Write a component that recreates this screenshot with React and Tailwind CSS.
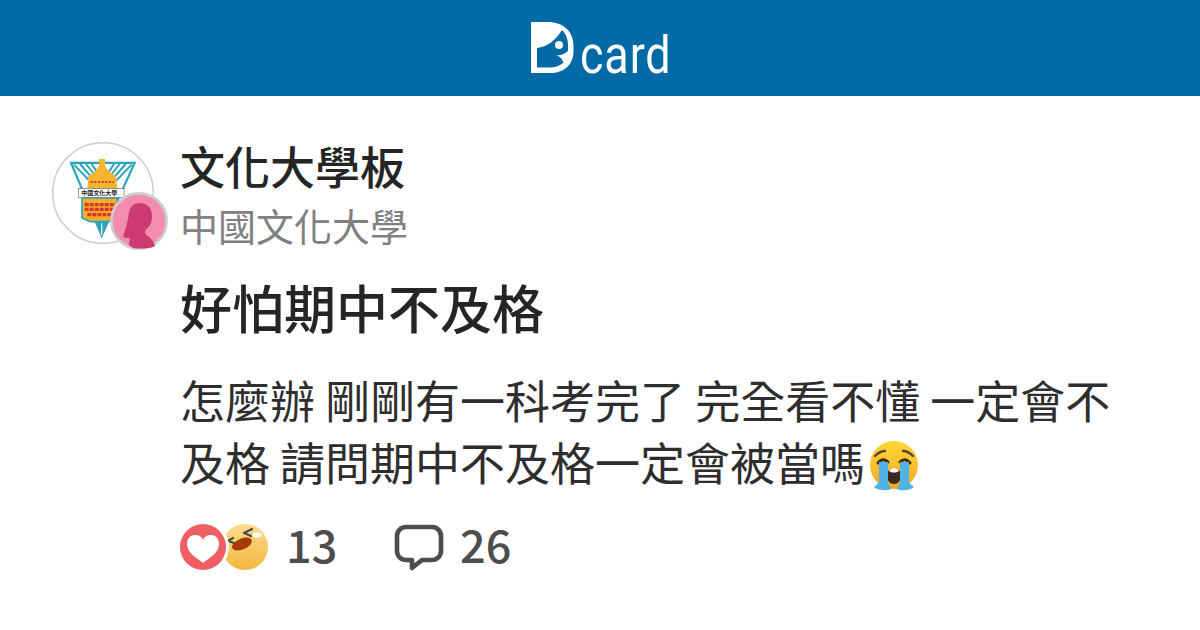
// Dcard share card: forum post preview
const cjk = { fontFamily: '"Noto Sans CJK TC", "Noto Sans", sans-serif' }

function DcardMark() {
  return (
    <svg width="43" height="52" viewBox="0 0 43 52" className="block shrink-0">
      <path
        fillRule="evenodd"
        fill="#fff"
        d="M0 0H17C32 0 42.5 9 42.5 24V29C42.5 43 33 51 19 51H0ZM6 26V45.5H19C30 45.5 37 39 37 28V24C37 17 35 12 31 8C25 18 16 25 6 26Z"
      />
      <circle cx="28" cy="23" r="4" fill="#fff" />
      <path d="M25 33C29 34 32 33 37 29V40H32C31 36 28 34 25 33Z" fill="#fff" />
    </svg>
  )
}

function SchoolLogo() {
  return (
    <svg viewBox="36 36 306 306" className="block w-[102px] h-[102px]">
      <circle cx="189" cy="189" r="151" fill="#fff" stroke="#cfcfcf" strokeWidth="5" />
      <path d="M88 95H289L185 325Z" fill="#2aa3bd" />
      <path d="M98 102H279L185 308Z" fill="#fff" />
      <g stroke="#2aa3bd" strokeWidth="6">
        <path d="M102 104L148 152M120 102L155 142M138 102L162 132M155 102L170 125M275 104L229 152M257 102L222 142M239 102L215 132M222 102L207 125" />
      </g>
      <path d="M164 272H206L185 322Z" fill="#2aa3bd" />
      <path d="M185 280V315" stroke="#fff" strokeWidth="4" />
      <path d="M177 87H195V108L207 125L228 138L232 178H142L145 138L165 125L177 108Z" fill="#f6b52e" />
      <path d="M152 156H222" stroke="#d9342b" strokeWidth="6" strokeDasharray="6 5" />
      <path d="M126 204H232V264L205 275H150L126 264Z" fill="#f4ae2c" stroke="#2aa3bd" strokeWidth="5" />
      <path d="M134 224H226M134 238H226M142 254H216" stroke="#d8352a" strokeWidth="10" strokeDasharray="12 3" />
      <rect x="116" y="175" width="136" height="28" fill="#fff" stroke="#333" strokeWidth="1.5" />
      <text x="124" y="196" fill="#222" fontSize="18" fontWeight="700" style={{ fontFamily: '"Noto Sans CJK TC", serif' }}>
        中國文化大學
      </text>
    </svg>
  )
}

function PersonAvatar() {
  return (
    <svg viewBox="0 0 58 58" className="block w-[58px] h-[58px]">
      <circle cx="29" cy="29" r="27.6" fill="#f28cb1" stroke="#cdcdcd" strokeWidth="2.6" />
      <path
        fill="#cc3a70"
        d="M13 45C16 36 18 28 19 21C20 14 24 11 30 11C37 11 42 16 42 24C42 30 40 35 36 37C35 39 35 41 36 43C40 45 44 49 45 54C42 56 36 56.5 30 56.5C26 56.5 21 56 19 53C19 50 20 47 20 46C18 46 15 46 13 45Z"
      />
    </svg>
  )
}

function CryEmoji() {
  return (
    <svg viewBox="0 0 56 56" className="inline-block w-[56px] h-[56px] align-[-14px]">
      <defs>
        <linearGradient id="cryFace" x1="0" y1="0" x2="0" y2="1">
          <stop offset="0" stopColor="#fdd835" />
          <stop offset="1" stopColor="#f9a825" />
        </linearGradient>
      </defs>
      <circle cx="29" cy="26" r="24" fill="url(#cryFace)" />
      <path d="M10 17Q15 12 20 12M48 17Q43 12 38 12" fill="none" stroke="#5d4037" strokeWidth="2.4" strokeLinecap="round" />
      <path d="M13 24Q18 18 23 23M35 23Q40 18 45 24" fill="none" stroke="#422b0d" strokeWidth="3" strokeLinecap="round" />
      <path d="M22 36C22 27 36 27 36 36C36 42 33 45 29 45C25 45 22 42 22 36Z" fill="#3b2a20" />
      <path d="M24 32C26 28 32 28 34 32C31 34 27 34 24 32Z" fill="#fff" />
      <path d="M14 23H23V44C24 47 27 49 26 50C23 52 13 52 9 48C11 46 13 45 14 43Z" fill="#4fb3e8" />
      <path d="M35 23H44V43C45 45 47 46 49 48C45 52 35 52 32 50C31 49 34 47 35 44Z" fill="#4fb3e8" />
    </svg>
  )
}

function Reactions() {
  return (
    <svg width="90" height="46" viewBox="0 0 90 46" className="block shrink-0">
      <defs>
        <linearGradient id="laughFace" x1="0" y1="0" x2="0" y2="1">
          <stop offset="0" stopColor="#f9dc8f" />
          <stop offset="1" stopColor="#f3b83c" />
        </linearGradient>
        <mask id="behindHeart">
          <rect width="90" height="46" fill="#fff" />
          <circle cx="23" cy="23" r="26" fill="#000" />
        </mask>
      </defs>
      <g mask="url(#behindHeart)">
        <circle cx="65" cy="23" r="23" fill="url(#laughFace)" />
        <ellipse cx="62" cy="20" rx="10.5" ry="5.5" fill="#a53c05" transform="rotate(-22 62 20)" />
        <path d="M72 5L64 9L71 12M53 14L48 17L54 19" stroke="#4a4a4a" strokeWidth="2.2" fill="none" strokeLinecap="round" strokeLinejoin="round" />
        <ellipse cx="77" cy="11" rx="4.5" ry="2.6" fill="#fff" />
      </g>
      <circle cx="23" cy="23" r="23" fill="#ee5f63" />
      <path
        d="M23 39C17 34 7 29 7 20C7 14 11 11 15 11C19 11 22 13 23 16C24 13 27 11 31 11C35 11 39 14 39 20C39 29 29 34 23 39Z"
        fill="#fff"
      />
    </svg>
  )
}

function CommentIcon() {
  return (
    <svg width="50" height="48" viewBox="0 0 50 48" className="block shrink-0">
      <path
        d="M12 4H38C43 4 47 8 47 13V28C47 33 43 37 38 37H28L18 45V37H12C7 37 3 33 3 28V13C3 8 7 4 12 4Z"
        fill="none"
        stroke="#4d4d4d"
        strokeWidth="4.6"
        strokeLinejoin="round"
      />
    </svg>
  )
}

export default function App() {
  return (
    <div className="w-[1200px] h-[630px] bg-white overflow-hidden" style={cjk}>
      <header className="h-24 bg-[#006aa6] flex items-start justify-center pt-[22px]">
        <div className="flex items-start gap-[6px]">
          <DcardMark />
          <span className="block w-[89px] mt-[8px] text-white text-[51px] leading-[51px] tracking-[1px] font-['Roboto',sans-serif] font-normal whitespace-nowrap origin-left scale-x-[0.88]">
            card
          </span>
        </div>
      </header>

      <main className="flex pl-[52px] pt-[43px]">
        <div className="relative w-[129px] shrink-0 h-[108px]">
          <div className="mt-[3px]">
            <SchoolLogo />
          </div>
          <div className="absolute left-[58px] top-[53px]">
            <PersonAvatar />
          </div>
        </div>

        <div className="w-[950px] -ml-[1px]">
          <div className="text-[45px] leading-[54px] font-medium text-[#252525]">文化大學板</div>
          <div className="text-[38px] leading-[54px] mt-[5px] text-[#808080]">中國文化大學</div>
          <h1 className="text-[52px] leading-[70px] font-medium text-[#252525] mt-[20px]">好怕期中不及格</h1>
          <p className="text-[45px] leading-[62px] text-[#2e2e2e] mt-[27px]">
            怎麼辦 剛剛有一科考完了 完全看不懂 一定會不及格 請問期中不及格一定會被當嗎<CryEmoji />
          </p>
          <div className="flex items-center mt-[26px] text-[45px] leading-[46px] text-[#4d4d4d] font-medium">
            <Reactions />
            <span className="ml-[16px] w-[108px] pb-[6px]">13</span>
            <CommentIcon />
            <span className="ml-[16px] pb-[6px]">26</span>
          </div>
        </div>
      </main>
    </div>
  )
}
